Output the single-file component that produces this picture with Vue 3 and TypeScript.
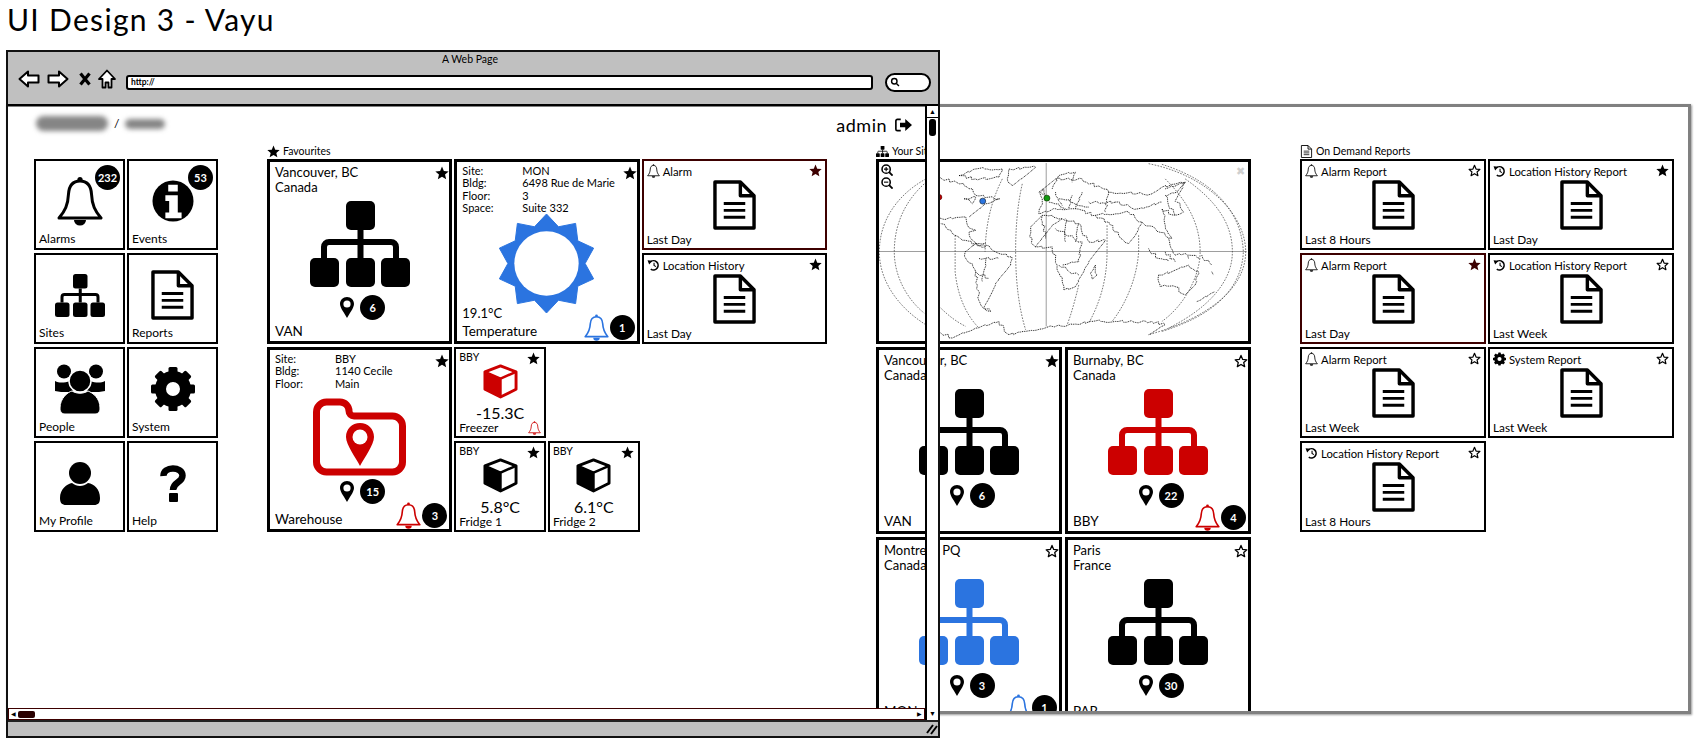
<template>
  <div class="page">
    <svg class="defs" width="0" height="0" aria-hidden="true">
      <symbol id="bell" viewBox="0 0 46 50">
        <circle cx="23" cy="3.5" r="2.6" fill="currentColor" />
        <path d="M23 5C31 5 34 11 34.5 18C35 29 38 35 44 42H2C8 35 11 29 11.5 18C12 11 15 5 23 5Z" fill="none" stroke="currentColor" stroke-width="3" stroke-linejoin="round" />
        <path d="M17 44a6 5.5 0 0 0 12 0Z" fill="currentColor" />
      </symbol>
      <symbol id="info" viewBox="0 0 44 44">
        <circle cx="22" cy="22" r="21.5" fill="currentColor" />
        <path d="M17 5h10v7H17zM14 16h13v18h4v6H14v-6h4v-12h-4z" fill="#fff" />
      </symbol>
      <symbol id="sitemap" viewBox="0 0 100 86">
        <rect x="36" width="29" height="29" rx="5" fill="currentColor" />
        <rect y="57" width="29" height="29" rx="5" fill="currentColor" />
        <rect x="36" y="57" width="29" height="29" rx="5" fill="currentColor" />
        <rect x="71" y="57" width="29" height="29" rx="5" fill="currentColor" />
        <path d="M50.500 29V57M14 57V46a5 5 0 0 1 5-5H81a5 5 0 0 1 5 5V57" fill="none" stroke="currentColor" stroke-width="6" />
      </symbol>
      <symbol id="doc" viewBox="0 0 44 51">
        <path d="M2 2H28L42 16V49H2Z" fill="#fff" stroke="currentColor" stroke-width="3.500" stroke-linejoin="round" />
        <path d="M28 2V16H42" fill="none" stroke="currentColor" stroke-width="3.500" stroke-linejoin="round" />
        <path d="M11 24H33M11 31H33M11 38H33" stroke="currentColor" stroke-width="3" />
      </symbol>
      <symbol id="people" viewBox="0 0 50 50">
        <circle cx="9" cy="7.500" r="7" fill="currentColor" />
        <circle cx="41" cy="7.500" r="7" fill="currentColor" />
        <path d="M0 17C4 19 9 19 15 17L18 28L6 28L0 27Z" fill="currentColor" />
        <path d="M50 17C46 19 41 19 35 17L32 28L44 28L50 27Z" fill="currentColor" />
        <circle cx="25" cy="17" r="11" fill="currentColor" stroke="#fff" stroke-width="1.500" />
        <path d="M5 44C5 34 13 28 17 27C22 30 28 30 33 27C38 29 45 34 45 44C45 48 43 50 40 50H10C7 50 5 48 5 44Z" fill="currentColor" stroke="#fff" stroke-width="1" />
      </symbol>
      <symbol id="gear" viewBox="0 0 44 44">
        <circle cx="22" cy="22" r="12.500" fill="none" stroke="currentColor" stroke-width="11" />
        <rect v-for="a in gearTeeth" :key="a" x="17.500" y="0" width="9" height="9" rx="1.500" fill="currentColor" :transform="`rotate(${a} 22 22)`" />
      </symbol>
      <symbol id="person" viewBox="0 0 40 43">
        <circle cx="20" cy="11" r="11" fill="currentColor" />
        <path d="M0 36C0 27 7 22 12 21C17 25 23 25 28 21C34 22 40 27 40 36C40 41 38 43 34 43H6C2 43 0 41 0 36Z" fill="currentColor" />
      </symbol>
      <symbol id="help" viewBox="0 0 26 37">
        <path d="M3.500 11C3 1 22.500 1 22.500 10.500C22.500 18 13 16.500 13 25" fill="none" stroke="currentColor" stroke-width="6.500" />
        <rect x="9" y="28" width="9" height="9" rx="1" fill="currentColor" />
      </symbol>
      <symbol id="pin" viewBox="0 0 14 21">
        <path d="M7 0C3 0 0 3 0 7C0 11 5 17 7 21C9 17 14 11 14 7C14 3 11 0 7 0Z" fill="currentColor" />
        <circle cx="7" cy="7" r="3.600" fill="#fff" />
      </symbol>
      <symbol id="star" viewBox="0 0 24 24">
        <polygon points="12,1 15.200,8.600 23.400,9.300 17.200,14.700 19.100,22.800 12,18.500 4.900,22.800 6.800,14.700 0.600,9.300 8.800,8.600" fill="currentColor" />
      </symbol>
      <symbol id="star-off" viewBox="0 0 24 24">
        <polygon points="12,2.500 14.900,9.300 22,10 16.700,14.700 18.300,21.600 12,17.900 5.700,21.600 7.300,14.700 2,10 9.100,9.300" fill="#fff" stroke="currentColor" stroke-width="2.200" stroke-linejoin="round" />
      </symbol>
      <symbol id="cube" viewBox="0 0 36 36">
        <path d="M2 9L18 15V34L2 26Z" fill="currentColor" />
        <path d="M18 2L34 8V26L18 34L2 26V8Z" fill="none" stroke="currentColor" stroke-width="3" stroke-linejoin="round" />
        <path d="M2 8L18 15L34 8M18 15V34" fill="none" stroke="currentColor" stroke-width="2.500" />
      </symbol>
      <symbol id="history" viewBox="0 0 24 24">
        <path d="M6 6.500A8.500 8.500 0 1 1 7 19.500" fill="none" stroke="currentColor" stroke-width="3" />
        <path d="M1 3L10 4L4 11Z" fill="currentColor" />
        <path d="M13 8V13L16.500 15" fill="none" stroke="currentColor" stroke-width="2" />
      </symbol>
      <symbol id="folder" viewBox="0 0 93 78">
        <path d="M3.500 14a10 10 0 0 1 10-10H27a9 9 0 0 1 9 9a5 5 0 0 0 5 5H79.500a10 10 0 0 1 10 10V64a10 10 0 0 1-10 10H13.500a10 10 0 0 1-10-10Z" fill="none" stroke="currentColor" stroke-width="7" />
        <path d="M47 25C39 25 33 31 33 39C33 47 43 60 47 68C51 60 61 47 61 39C61 31 55 25 47 25Z" fill="currentColor" />
        <circle cx="47" cy="39" r="7.500" fill="#fff" />
      </symbol>
      <symbol id="sun" viewBox="0 0 100 100">
        <polygon :points="sunPoints" fill="currentColor" stroke="currentColor" stroke-width="1" stroke-linejoin="round" />
        <circle cx="50" cy="50" r="32.500" fill="#fff" />
      </symbol>
      <symbol id="logout" viewBox="0 0 24 20">
        <path d="M9 2.500H4.500a2 2 0 0 0-2 2V15.500a2 2 0 0 0 2 2H9" fill="none" stroke="currentColor" stroke-width="2.200" />
        <path d="M8 7H15V2L24 10L15 18V13H8Z" fill="currentColor" />
      </symbol>
      <symbol id="zoom-in" viewBox="0 0 14 14">
        <circle cx="6" cy="6" r="4.800" fill="#fff" stroke="currentColor" stroke-width="1.800" />
        <path d="M9.500 9.500L13.500 13.500" stroke="currentColor" stroke-width="2.200" />
        <path d="M3.500 6H8.500M6 3.500V8.500" stroke="currentColor" stroke-width="1.300" />
      </symbol>
      <symbol id="zoom-out" viewBox="0 0 14 14">
        <circle cx="6" cy="6" r="4.800" fill="#fff" stroke="currentColor" stroke-width="1.800" />
        <path d="M9.500 9.500L13.500 13.500" stroke="currentColor" stroke-width="2.200" />
        <path d="M3.500 6H8.500" stroke="currentColor" stroke-width="1.300" />
      </symbol>
    </svg>

    <h1 class="title">UI Design 3 - Vayu</h1>

    <div class="stage">
      <div class="board">
        <div class="topline">
          <div class="crumbs">
            <span class="blur blur-site"></span>
            <span class="slash">/</span>
            <span class="blur blur-page"></span>
          </div>
          <div class="user">
            admin
            <svg class="ic-logout"><use href="#logout" /></svg>
          </div>
        </div>

        <div class="columns">
          <section v-for="col in columns" :key="col.id" :class="['col', `col-${col.id}`]">
            <div class="col-label">
              <svg v-if="col.icon" class="label-icon"><use :href="`#${col.icon}`" /></svg>
              {{ col.label }}
            </div>
            <div class="col-grid">
              <div
                v-for="(card, i) in col.cards"
                :key="i"
                :class="['card', `card-${card.kind}`, card.alert && 'card-alert', card.wrap && 'card-wrap', card.tone && `tone-${card.tone}`]"
              >
                <svg v-if="card.star" :class="['star', card.alert && 'star-dark']">
                  <use :href="card.star === 'on' ? '#star' : '#star-off'" />
                </svg>

                <template v-if="card.kind === 'tile'">
                  <span v-if="card.count" class="badge tile-badge">{{ card.count }}</span>
                  <svg :class="['tile-icon', `ic-${card.icon}`]"><use :href="`#${card.icon}`" /></svg>
                  <div class="tile-label">{{ card.footer }}</div>
                </template>

                <template v-else-if="card.kind === 'big'">
                  <div v-if="card.lines" class="lines">
                    <div v-for="line in card.lines" :key="line">{{ line }}</div>
                  </div>
                  <div v-if="card.details" class="details">
                    <div v-for="[k, v] in card.details" :key="k" class="detail">
                      <span class="detail-key">{{ k }}</span>{{ v }}
                    </div>
                  </div>
                  <svg :class="['big-icon', `ic-${card.icon}`]"><use :href="`#${card.icon}`" /></svg>
                  <div v-if="card.pins" class="pins">
                    <svg class="pin"><use href="#pin" /></svg>
                    <span class="badge">{{ card.pins }}</span>
                  </div>
                  <div v-if="card.reading" class="big-reading">{{ card.reading }}</div>
                  <div class="big-footer">
                    <span>{{ card.footer }}</span>
                    <span v-if="card.alarms" class="alarms">
                      <svg class="alarm-bell"><use href="#bell" /></svg>
                      <span class="badge">{{ card.alarms }}</span>
                    </span>
                  </div>
                </template>

                <template v-else-if="card.kind === 'report'">
                  <div class="report-head">
                    <svg class="report-icon"><use :href="`#${card.icon}`" /></svg>
                    {{ card.title }}
                  </div>
                  <svg class="report-doc"><use href="#doc" /></svg>
                  <div class="report-foot">{{ card.footer }}</div>
                </template>

                <template v-else-if="card.kind === 'device'">
                  <div class="device-site">{{ card.title }}</div>
                  <svg class="cube"><use href="#cube" /></svg>
                  <div class="device-reading">{{ card.reading }}</div>
                  <div class="device-foot">
                    <span class="device-name">{{ card.footer }}</span>
                    <svg v-if="card.alarms" class="device-bell"><use href="#bell" /></svg>
                  </div>
                </template>

                <template v-else>
                  <svg class="world" viewBox="9 9 1110 540" preserveAspectRatio="none">
                    <path d="M512 12V505M9 279H1115" fill="none" stroke="#8a8a8a" stroke-width="2.500" />
                    <path v-for="(d, n) in graticule" :key="n" :d="d" fill="none" stroke="#333" stroke-width="2" stroke-dasharray="5 4" />
                    <path v-for="(d, n) in coasts" :key="n" :d="d" fill="none" stroke="#000" stroke-width="2.600" stroke-dasharray="3 2.500" />
                    <circle cx="190" cy="115" r="8" fill="#c00000" stroke="#500" stroke-width="2" />
                    <circle cx="321" cy="127" r="9" fill="#2b74e0" stroke="#123" stroke-width="2" />
                    <circle cx="514" cy="118" r="9" fill="#129a12" stroke="#130" stroke-width="2" />
                  </svg>
                  <svg class="map-zoom map-zoom-in"><use href="#zoom-in" /></svg>
                  <svg class="map-zoom map-zoom-out"><use href="#zoom-out" /></svg>
                  <span class="map-close">&#10006;</span>
                </template>
              </div>
            </div>
          </section>
        </div>
      </div>

      <div class="browser">
        <div class="browser-top">
          <div class="browser-name">A Web Page</div>
          <div class="browser-nav">
            <svg class="nav-icon nav-arrow" viewBox="0 0 22 18"><path d="M1.500 9L10 1.500V5.500H20.500V12.500H10V16.500Z" fill="#fff" stroke="#000" stroke-width="2" stroke-linejoin="round" /></svg>
            <svg class="nav-icon nav-arrow" viewBox="0 0 22 18"><path d="M20.500 9L12 1.500V5.500H1.500V12.500H12V16.500Z" fill="#fff" stroke="#000" stroke-width="2" stroke-linejoin="round" /></svg>
            <svg class="nav-icon nav-x" viewBox="0 0 12 14"><path d="M1.500 1.500L10.500 12.500M10.500 1.500L1.500 12.500" stroke="#000" stroke-width="3.200" /></svg>
            <svg class="nav-icon nav-home" viewBox="0 0 18 20"><path d="M9 1.500L1 10H4.500V18.500H7.500V13.500H10.500V18.500H13.500V10H17Z" fill="#fff" stroke="#000" stroke-width="1.800" stroke-linejoin="round" /></svg>
            <div class="url">http://</div>
            <div class="search">
              <svg class="search-icon" viewBox="0 0 14 14"><circle cx="6" cy="6" r="3.800" fill="none" stroke="#000" stroke-width="2" /><path d="M9 9L12.500 12.500" stroke="#000" stroke-width="2" /></svg>
            </div>
          </div>
        </div>
        <div class="browser-body">
          <div class="vscroll">
            <span class="scroll-btn">&#9650;</span>
            <span class="vthumb"></span>
          </div>
        </div>
        <div class="hscroll-row">
          <div class="hscroll">
            <span class="hbtn">&#9664;</span>
            <span class="hthumb"></span>
            <span class="hspace"></span>
            <span class="hbtn">&#9654;</span>
          </div>
          <span class="scroll-btn scroll-btn-down">&#9660;</span>
        </div>
        <div class="browser-bottom">
          <svg class="grip" viewBox="0 0 12 12"><path d="M1 10L7 2M5 11L11 3" stroke="#000" stroke-width="2" /></svg>
        </div>
      </div>
    </div>
  </div>
</template>

<script setup lang="ts">
type Kind = 'tile' | 'big' | 'report' | 'device' | 'map'

interface Card {
  kind: Kind
  icon?: string
  title?: string
  footer?: string
  lines?: string[]
  details?: [string, string][]
  count?: number
  pins?: number
  alarms?: number
  reading?: string
  star?: 'on' | 'off'
  tone?: 'red' | 'blue'
  alert?: boolean
  wrap?: boolean
}

interface Column {
  id: string
  label: string
  icon?: string
  cards: Card[]
}

const gearTeeth = [0, 45, 90, 135, 180, 225, 270, 315]

const sunPoints = Array.from({ length: 20 }, (_, i) => {
  const r = i % 2 ? 39 : 50
  const a = (i * Math.PI) / 10
  return `${(50 + r * Math.sin(a)).toFixed(1)},${(50 - r * Math.cos(a)).toFixed(1)}`
}).join(' ')

const report = (icon: string, title: string, footer: string, star: 'on' | 'off', alert = false): Card => ({
  kind: 'report',
  icon,
  title,
  footer,
  star,
  alert
})

const site = (lines: string[], footer: string, pins: number, star: 'on' | 'off', tone?: 'red' | 'blue', alarms?: number): Card => ({
  kind: 'big',
  icon: 'sitemap',
  lines,
  footer,
  pins,
  star,
  tone,
  alarms
})

const columns: Column[] = [
  {
    id: 'tiles',
    label: '',
    cards: [
      { kind: 'tile', icon: 'bell', footer: 'Alarms', count: 232 },
      { kind: 'tile', icon: 'info', footer: 'Events', count: 53 },
      { kind: 'tile', icon: 'sitemap', footer: 'Sites' },
      { kind: 'tile', icon: 'doc', footer: 'Reports' },
      { kind: 'tile', icon: 'people', footer: 'People' },
      { kind: 'tile', icon: 'gear', footer: 'System' },
      { kind: 'tile', icon: 'person', footer: 'My Profile' },
      { kind: 'tile', icon: 'help', footer: 'Help' }
    ]
  },
  {
    id: 'favourites',
    label: 'Favourites',
    icon: 'star',
    cards: [
      site(['Vancouver, BC', 'Canada'], 'VAN', 6, 'on'),
      {
        kind: 'big',
        icon: 'sun',
        tone: 'blue',
        star: 'on',
        details: [
          ['Site:', 'MON'],
          ['Bldg:', '6498 Rue de Marie'],
          ['Floor:', '3'],
          ['Space:', 'Suite 332']
        ],
        reading: '19.1°C',
        footer: 'Temperature',
        alarms: 1
      },
      report('bell', 'Alarm', 'Last Day', 'on', true),
      report('history', 'Location History', 'Last Day', 'on'),
      {
        kind: 'big',
        icon: 'folder',
        tone: 'red',
        star: 'on',
        details: [
          ['Site:', 'BBY'],
          ['Bldg:', '1140 Cecile'],
          ['Floor:', 'Main']
        ],
        pins: 15,
        footer: 'Warehouse',
        alarms: 3
      },
      { kind: 'device', tone: 'red', title: 'BBY', reading: '-15.3C', footer: 'Freezer', star: 'on', alarms: 1 },
      { kind: 'device', title: 'BBY', reading: '5.8°C', footer: 'Fridge 1', star: 'on', wrap: true },
      { kind: 'device', title: 'BBY', reading: '6.1°C', footer: 'Fridge 2', star: 'on' }
    ]
  },
  {
    id: 'sites',
    label: 'Your Sites',
    icon: 'sitemap',
    cards: [
      { kind: 'map' },
      site(['Vancouver, BC', 'Canada'], 'VAN', 6, 'on'),
      site(['Burnaby, BC', 'Canada'], 'BBY', 22, 'off', 'red', 4),
      site(['Montreal, PQ', 'Canada'], 'MON', 3, 'off', 'blue', 1),
      site(['Paris', 'France'], 'PAR', 30, 'off')
    ]
  },
  {
    id: 'reports',
    label: 'On Demand Reports',
    icon: 'doc',
    cards: [
      report('bell', 'Alarm Report', 'Last 8 Hours', 'off'),
      report('history', 'Location History Report', 'Last Day', 'on'),
      report('bell', 'Alarm Report', 'Last Day', 'on', true),
      report('history', 'Location History Report', 'Last Week', 'off'),
      report('bell', 'Alarm Report', 'Last Week', 'off'),
      report('gear', 'System Report', 'Last Week', 'off'),
      report('history', 'Location History Report', 'Last 8 Hours', 'off')
    ]
  }
]

const graticule = [
  'M150 60C60 110 10 190 10 280C10 370 70 450 150 500',
  'M145 75C85 130 55 200 55 280C55 350 90 420 145 465',
  'M190 445C215 470 240 490 270 505',
  'M238 230V340C245 410 270 470 310 510',
  'M380 60C345 130 330 200 328 280',
  'M440 75C425 140 420 210 420 280C420 370 430 450 450 515',
  'M610 380C600 420 590 460 575 500',
  'M695 200V280C695 370 670 440 640 495',
  'M790 230V280C785 360 750 440 710 490',
  'M870 60C940 130 975 200 975 280C975 350 930 440 860 490',
  'M930 60C1030 130 1072 200 1072 280C1072 370 1000 450 880 510',
  'M820 14C1000 50 1112 170 1112 280C1112 390 1000 480 820 530',
  'M860 16C1030 70 1100 170 1105 280C1100 390 1020 470 860 520'
]

// outlines are rough polylines, roughen() breaks them up so they read as coastlines
const outlines = [
  'M192 178L230 180L270 175L275 200L300 215L280 220L290 245L330 265L300 255L260 245L225 215L195 195',
  'M192 55L250 75L290 90L300 110L340 115L372 120L330 135L280 175',
  'M250 50L300 30L380 30L370 55L300 60Z',
  'M400 30L480 25L450 50L410 80L395 60Z',
  'M265 120L300 115L290 135Z',
  'M268 280L300 255L340 262L370 285L408 295L405 320L360 375L345 410L325 450L345 460L315 440L305 380L300 340L270 300Z',
  'M300 340L340 360M330 300L320 370M310 300L370 300',
  'M465 205L500 170L560 180L610 195L640 250L690 245L640 310L625 340L600 385L565 395L545 320L530 265L480 265L462 235Z',
  'M480 265L530 200L560 180M540 210L620 250L610 310L560 320M610 195L600 250M550 320L610 350M500 170L510 240M570 180L570 250',
  'M660 320L665 350L650 362L645 345Z',
  'M490 165L500 130L490 100L540 60L620 60L700 100L830 105L860 85L930 70L905 100L870 110L900 170L860 150L870 200L890 240L840 210L800 190L780 230L760 255L730 230L700 190L660 170L600 150L540 150Z',
  'M530 90L550 50L600 40L590 70M495 100L505 90L510 110Z',
  'M600 150L620 100M660 170L760 160L800 190M700 100L690 160M520 130L570 150M540 100L560 140M590 110L580 150M640 130L720 130M550 120L640 145M720 130L790 150L860 130',
  'M820 270L850 300L880 310M880 240L900 290L930 285L940 300M980 290L1010 320M1010 340L1015 350M870 280L900 310M940 290L975 300',
  'M850 350L890 340L940 320L970 340L960 380L930 410L900 385L855 385Z',
  'M965 430L1020 400M905 130L925 160L900 170M870 90L930 70L900 130',
  'M190 520L230 540L300 510L370 490L400 530L450 520L530 505L600 498L650 490L720 490L830 490L870 500L820 530'
]

function roughen(outline: string): string {
  let seed = 7
  return outline
    .split('M')
    .filter(Boolean)
    .map((part) => {
      const pts = [...part.matchAll(/(\d+) (\d+)/g)].map((m) => [Number(m[1]), Number(m[2])])
      if (part.includes('Z')) pts.push(pts[0])
      let d = `M${pts[0][0]} ${pts[0][1]}`
      for (let i = 1; i < pts.length; i++) {
        const [ax, ay] = pts[i - 1]
        const [bx, by] = pts[i]
        const steps = Math.max(1, Math.round(Math.hypot(bx - ax, by - ay) / 9))
        for (let s = 1; s <= steps; s++) {
          seed = (seed * 31 + 11) % 101
          const wob = s === steps ? 0 : (seed / 101 - 0.5) * 9
          d += `L${(ax + ((bx - ax) * s) / steps + wob).toFixed(1)} ${(ay + ((by - ay) * s) / steps - wob).toFixed(1)}`
        }
      }
      return d
    })
    .join('')
}

const coasts = outlines.map(roughen)
</script>

<style>
html,
body {
  overflow: hidden;
  background: #fff;
}
</style>

<style scoped>
.page {
  width: 1700px;
  height: 745px;
  overflow: hidden;
  font-family: Lato, 'Noto Sans', sans-serif;
  color: #000;
  background: #fff;
}
.defs {
  position: absolute;
}
.title {
  height: 50px;
  margin: 0;
  padding: 0 0 0 7px;
  box-sizing: border-box;
  font-size: 30px;
  line-height: 38px;
  font-weight: 400;
  letter-spacing: 1.3px;
}
.stage {
  position: relative;
  padding: 54px 0 0 6px;
  height: 664px;
  box-sizing: border-box;
}

/* the page itself, wider than the browser it sits in */
.board {
  width: 1685px;
  height: 610px;
  box-sizing: border-box;
  border: 3px solid #808080;
  border-left: 0;
  box-shadow: 1px 1px 2px #999;
  padding-left: 28px;
  overflow: hidden;
}
.topline {
  width: 878px;
  height: 36px;
  display: flex;
  justify-content: space-between;
  align-items: flex-start;
}
.crumbs {
  display: flex;
  align-items: center;
  margin: 9px 0 0 2px;
}
.blur {
  display: block;
  background: #858585;
  border-radius: 8px;
  filter: blur(2.5px);
}
.blur-site {
  width: 72px;
  height: 15px;
}
.blur-page {
  width: 40px;
  height: 10px;
}
.slash {
  margin: 0 6px;
  font-size: 12px;
}
.user {
  display: flex;
  align-items: center;
  gap: 7px;
  margin: 7px 0 0;
  font-size: 18px;
  line-height: 22px;
  letter-spacing: 0.5px;
}
.ic-logout {
  width: 18px;
  height: 16px;
}
.columns {
  display: flex;
  gap: 49px;
}
.col-label {
  height: 16px;
  display: flex;
  align-items: center;
  gap: 3px;
  font-size: 10.500px;
  line-height: 16px;
  white-space: nowrap;
}
.label-icon {
  width: 13px;
  height: 13px;
}
.col-grid {
  display: grid;
  grid-auto-rows: 91px;
  gap: 3px 2px;
}
.col-tiles {
  width: 184px;
}
.col-tiles .col-grid {
  grid-template-columns: 91px 91px;
}
.col-favourites {
  width: 560px;
}
.col-favourites .col-grid {
  grid-template-columns: repeat(6, 1fr);
}
.col-favourites .card-big,
.col-favourites .card-report {
  grid-column: span 2;
}
.col-favourites .card-big {
  grid-row: span 2;
}
.col-favourites .card-wrap {
  grid-column-start: 3;
}
.col-sites {
  width: 375px;
}
.col-sites .col-grid {
  grid-template-columns: 1fr 1fr;
  grid-template-rows: 185px;
  grid-auto-rows: 187px;
  gap: 3px;
}
.col-reports {
  width: 374px;
}
.col-reports .col-grid {
  grid-template-columns: 1fr 1fr;
}

.card {
  position: relative;
  box-sizing: border-box;
  border: 2px solid #000;
  background: #fff;
  min-width: 0;
}
.tone-red {
  color: #cc0000;
}
.tone-blue {
  color: #2b74e0;
}
.star {
  position: absolute;
  top: 3px;
  right: 3px;
  width: 14px;
  height: 14px;
  color: #000;
}
.star-dark {
  color: #3d0000;
}
.badge {
  display: flex;
  align-items: center;
  justify-content: center;
  width: 25px;
  height: 25px;
  border-radius: 50%;
  background: #000;
  color: #fff;
  font-size: 11px;
  font-weight: 700;
}

/* tiles */
.card-tile {
  display: flex;
  flex-direction: column;
  align-items: center;
  padding: 9px 3px 2px;
}
.tile-badge {
  position: absolute;
  top: 4px;
  right: 3px;
}
.tile-icon {
  margin: auto;
}
.tile-label {
  align-self: flex-start;
  height: 14px;
  font-size: 12px;
  line-height: 14px;
}
.card-tile .ic-bell {
  width: 46px;
  height: 50px;
}
.card-tile .ic-info {
  width: 42px;
  height: 42px;
}
.card-tile .ic-sitemap {
  width: 50px;
  height: 43px;
}
.card-tile .ic-doc {
  width: 43px;
  height: 50px;
}
.card-tile .ic-people {
  width: 50px;
  height: 50px;
}
.card-tile .ic-gear {
  width: 44px;
  height: 44px;
}
.card-tile .ic-person {
  width: 40px;
  height: 43px;
}
.card-tile .ic-help {
  width: 26px;
  height: 37px;
}

/* site and sensor cards */
.card-big {
  border-width: 3px;
  display: flex;
  flex-direction: column;
  align-items: center;
  padding: 3px 5px 2px;
  overflow: hidden;
}
.card-big .star {
  top: 4px;
  right: 0;
}
.lines {
  align-self: stretch;
  height: 30px;
  font-size: 13px;
  line-height: 15px;
  color: #000;
}
.details {
  align-self: stretch;
  font-size: 11px;
  line-height: 12.300px;
  color: #000;
}
.detail-key {
  display: inline-block;
  width: 60px;
}
.big-icon {
  flex: none;
}
.ic-sitemap.big-icon {
  width: 100px;
  height: 86px;
  margin-top: 6px;
}
.ic-sun.big-icon {
  width: 99px;
  height: 99px;
  margin-top: 0;
  margin-bottom: -18px;
}
.ic-folder.big-icon {
  width: 93px;
  height: 78px;
  margin-top: 8px;
}
.pins {
  display: flex;
  flex: none;
  align-items: center;
  gap: 6px;
  margin: 8px 0 0 6px;
  color: #000;
}
.ic-folder + .pins {
  margin-top: 3px;
}
.pin {
  width: 14px;
  height: 21px;
}
.big-reading {
  align-self: stretch;
  margin-top: auto;
  margin-bottom: 3px;
  font-size: 13px;
  line-height: 16px;
  color: #000;
}
.big-footer {
  align-self: stretch;
  flex: none;
  margin-top: auto;
  height: 15px;
  display: flex;
  justify-content: space-between;
  align-items: flex-end;
  font-size: 13.500px;
  line-height: 15px;
  color: #000;
}
.big-reading + .big-footer {
  margin-top: 0;
}
.alarms {
  display: flex;
  align-items: center;
  gap: 1px;
  margin: 0 -3px -2px 0;
}
.alarm-bell {
  width: 25px;
  height: 27px;
}
.tone-red .alarm-bell {
  color: #cc0000;
}
.tone-blue .alarm-bell {
  color: #2b74e0;
}

/* report cards */
.card-report {
  display: flex;
  flex-direction: column;
  align-items: center;
  padding: 2px 3px 1px;
}
.card-alert {
  border-color: #3d0000;
}
.report-head {
  align-self: stretch;
  display: flex;
  align-items: center;
  gap: 3px;
  height: 16px;
  font-size: 11.300px;
  white-space: nowrap;
}
.report-icon {
  width: 13px;
  height: 14px;
}
.report-doc {
  width: 43px;
  height: 50px;
  margin-top: 1px;
}
.report-foot {
  align-self: flex-start;
  margin-top: auto;
  font-size: 11.800px;
  line-height: 14px;
}
.card-report .star {
  top: 3px;
  right: 3px;
  width: 13px;
  height: 13px;
}

/* sensor tiles */
.card-device {
  display: flex;
  flex-direction: column;
  align-items: center;
  padding: 2px 3px 1px;
}
.card-device .star {
  width: 13px;
  height: 13px;
  top: 3px;
  right: 4px;
}
.device-site {
  align-self: flex-start;
  height: 13px;
  font-size: 10.500px;
  line-height: 13px;
  color: #000;
}
.cube {
  width: 35px;
  height: 35px;
}
.device-reading {
  margin-top: 5px;
  font-size: 16px;
  line-height: 17px;
  color: #000;
}
.device-foot {
  align-self: stretch;
  margin-top: auto;
  display: flex;
  justify-content: space-between;
  align-items: flex-end;
}
.device-name {
  font-size: 12px;
  line-height: 14px;
  color: #000;
}
.device-bell {
  width: 13px;
  height: 14px;
}

/* map */
.card-map {
  grid-column: span 2;
  border-width: 3px;
  overflow: hidden;
}
.world {
  display: block;
  width: 100%;
  height: 100%;
}
.map-zoom {
  position: absolute;
  left: 2px;
  width: 12px;
  height: 12px;
}
.map-zoom-in {
  top: 2px;
}
.map-zoom-out {
  top: 15px;
}
.map-close {
  position: absolute;
  top: 2px;
  right: 3px;
  font-size: 11px;
  line-height: 14px;
  color: #cfcfcf;
}

/* browser chrome laid over the page */
.browser {
  position: absolute;
  top: 0;
  left: 6px;
  width: 934px;
  height: 688px;
  box-sizing: border-box;
  border: 2px solid #111;
  display: flex;
  flex-direction: column;
}
.browser-top {
  height: 54px;
  box-sizing: border-box;
  background: #c0c0c0;
  border-bottom: 2px solid #000;
}
.browser-name {
  height: 18px;
  font-size: 10.500px;
  line-height: 15px;
  text-align: center;
  padding-right: 6px;
}
.browser-nav {
  display: flex;
  align-items: center;
  height: 20px;
  margin-top: 2px;
  padding-left: 10px;
}
.nav-icon {
  flex: none;
  margin-top: -6px;
}
.nav-arrow {
  width: 22px;
  height: 18px;
  margin-right: 7px;
}
.nav-x {
  width: 12px;
  height: 14px;
  margin-left: 3px;
  margin-right: 7px;
}
.nav-home {
  width: 18px;
  height: 20px;
  margin-right: 10px;
}
.url {
  flex: none;
  box-sizing: border-box;
  width: 747px;
  height: 15px;
  border: 2px solid #000;
  border-radius: 3px;
  background: #fff;
  padding-left: 3px;
  font-size: 8.500px;
  line-height: 11px;
  font-weight: 700;
}
.search {
  flex: none;
  box-sizing: border-box;
  width: 46px;
  height: 19px;
  margin-left: 12px;
  border: 2px solid #000;
  border-radius: 10px;
  background: #fff;
  padding: 2px 0 0 3px;
}
.search-icon {
  display: block;
  width: 10px;
  height: 10px;
}
.browser-body {
  flex: 1;
  display: flex;
  justify-content: flex-end;
  min-height: 0;
}
.vscroll {
  width: 11px;
  box-sizing: content-box;
  background: #fff;
  border-left: 2px solid #000;
  display: flex;
  flex-direction: column;
  align-items: center;
}
.scroll-btn {
  width: 11px;
  height: 11px;
  border-bottom: 1px solid #000;
  font-size: 7px;
  line-height: 11px;
  text-align: center;
  background: #fff;
}
.vthumb {
  width: 7px;
  height: 17px;
  margin-top: 1px;
  border-radius: 3px;
  background: #000;
}
.hscroll-row {
  flex: none;
  height: 12px;
  display: flex;
}
.hscroll {
  flex: 1;
  display: flex;
  align-items: center;
  box-sizing: border-box;
  border: 1px solid #3d0000;
  background: #fff;
}
.hbtn {
  width: 9px;
  font-size: 6px;
  line-height: 10px;
  text-align: center;
}
.hthumb {
  width: 17px;
  height: 7px;
  border-radius: 2px;
  background: #2a0000;
}
.hspace {
  flex: 1;
}
.scroll-btn-down {
  border: 0;
  border-left: 2px solid #000;
  width: 11px;
  height: 12px;
}
.browser-bottom {
  flex: none;
  height: 14px;
  background: #c0c0c0;
  border-top: 2px solid #222;
  display: flex;
  justify-content: flex-end;
  align-items: center;
}
.grip {
  width: 12px;
  height: 12px;
}
</style>
